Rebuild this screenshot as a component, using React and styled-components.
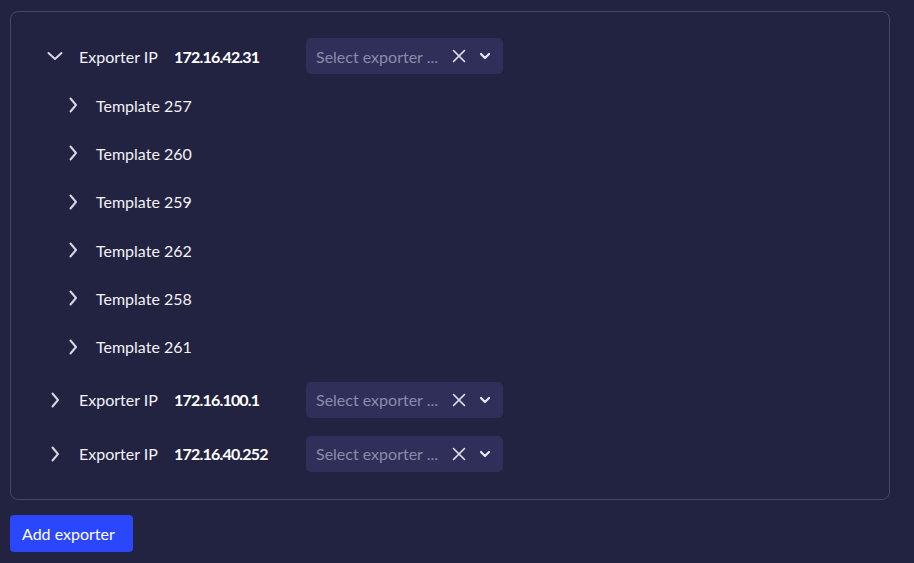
import React from 'react';
import styled, { createGlobalStyle } from 'styled-components';

const GlobalStyle = createGlobalStyle`
  body {
    margin: 0;
    background: #222241;
    font-family: 'Lato', 'Noto Sans', sans-serif;
    color: #ffffff;
  }
`;

const Page = styled.div`
  padding: 11px 24px 11px 10px;
  min-height: 563px;
  box-sizing: border-box;
`;

const Panel = styled.div`
  border: 1px solid #474867;
  border-radius: 8px;
  padding: 26px 0 27px 34px;
  display: flex;
  flex-direction: column;
  gap: 18px;
`;

const Block = styled.div`
  display: flex;
  flex-direction: column;
`;

const Row = styled.div`
  display: flex;
  align-items: center;
  height: ${p => (p.$small ? '48.3px' : '36px')};
  padding-left: ${p => (p.$small ? '18px' : '0')};
`;

const Toggle = styled.span`
  width: 20px;
  height: 20px;
  display: flex;
  align-items: center;
  justify-content: center;
  margin-right: 14px;
  color: #d6d6e6;
`;

const Label = styled.span`
  font-size: 16px;
  color: #f2f2f8;
  width: 95px;
`;

const Ip = styled.span`
  font-size: 16px;
  font-weight: 700;
  letter-spacing: -0.8px;
  width: 132px;
`;

const TemplateName = styled.span`
  font-size: 16px;
  color: #f2f2f8;
  margin-left: -1px;
`;

const List = styled.div`
  display: flex;
  flex-direction: column;
  margin: 7px 0 -7px;
`;

const Select = styled.div`
  width: 197px;
  height: 36px;
  box-sizing: border-box;
  background: #2f2f5a;
  border-radius: 5px;
  display: flex;
  align-items: center;
  padding: 0 12px 0 10px;
`;

const Placeholder = styled.span`
  flex: 1;
  font-size: 16px;
  color: #8b8ba9;
  white-space: nowrap;
  overflow: hidden;
`;

const IconBox = styled.span`
  display: flex;
  align-items: center;
  color: #e6e6f0;
  margin-left: ${p => p.$gap || 0}px;
`;

const AddButton = styled.button`
  margin-top: 15px;
  width: 123px;
  height: 37px;
  padding: 0 0 0 12px;
  text-align: left;
  border: none;
  border-radius: 4px;
  background: #2a47fb;
  color: #fff;
  font-family: inherit;
  font-size: 16px;
`;

const ChevronRight = () => (
  <svg width="10" height="16" viewBox="0 0 10 16" fill="none" stroke="currentColor" strokeWidth="2" strokeLinecap="round" strokeLinejoin="round">
    <path d="M2.5 1.5 L8 8 L2.5 14.5" />
  </svg>
);

const ChevronDown = () => (
  <svg width="16" height="10" viewBox="0 0 16 10" fill="none" stroke="currentColor" strokeWidth="2" strokeLinecap="round" strokeLinejoin="round">
    <path d="M1.5 2 L8 8 L14.5 2" />
  </svg>
);

const SmallDown = () => (
  <svg width="12" height="8" viewBox="0 0 12 8" fill="none" stroke="currentColor" strokeWidth="2.2" strokeLinecap="round" strokeLinejoin="round">
    <path d="M2 2 L6 6 L10 2" />
  </svg>
);

const Cross = () => (
  <svg width="14" height="14" viewBox="0 0 14 14" fill="none" stroke="currentColor" strokeWidth="1.6" strokeLinecap="round">
    <path d="M1.5 1.5 L12.5 12.5 M12.5 1.5 L1.5 12.5" />
  </svg>
);

function ExporterSelect() {
  return (
    <Select>
      <Placeholder>Select exporter ...</Placeholder>
      <IconBox $gap={8}><Cross /></IconBox>
      <IconBox $gap={13}><SmallDown /></IconBox>
    </Select>
  );
}

const exporters = [
  { ip: '172.16.42.31', open: true, templates: [257, 260, 259, 262, 258, 261] },
  { ip: '172.16.100.1', open: false, templates: [] },
  { ip: '172.16.40.252', open: false, templates: [] },
];

export default function App() {
  return (
    <Page>
      <GlobalStyle />
      <Panel>
        {exporters.map(exp => (
          <Block key={exp.ip}>
            <Row>
              <Toggle>{exp.open ? <ChevronDown /> : <ChevronRight />}</Toggle>
              <Label>Exporter IP</Label>
              <Ip>{exp.ip}</Ip>
              <ExporterSelect />
            </Row>
            {exp.open && (
              <List>
                {exp.templates.map(t => (
                  <Row $small key={t}>
                    <Toggle><ChevronRight /></Toggle>
                    <TemplateName>Template {t}</TemplateName>
                  </Row>
                ))}
              </List>
            )}
          </Block>
        ))}
      </Panel>
      <AddButton>Add exporter</AddButton>
    </Page>
  );
}
